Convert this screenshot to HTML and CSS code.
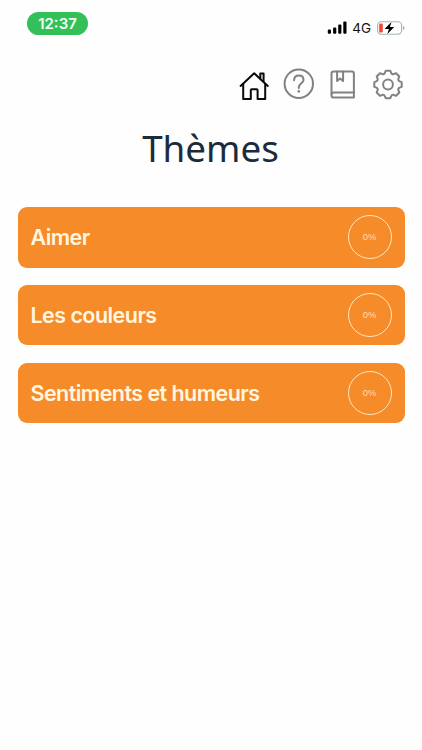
FILE: index.html
```html
<!DOCTYPE html>
<html lang="fr">
<head>
    <meta charset="UTF-8">
    <meta name="viewport" content="width=device-width, initial-scale=1.0">
    <title>Thèmes</title>
    <link rel="stylesheet" href="styles.css">
</head>
<body>
    <div class="status-bar">
        <span class="time">12:37</span>
        <div class="status-right">
            <svg class="signal" width="20" height="13" viewBox="0 0 20 13">
                <rect x="0.8" y="8.6" width="3.2" height="4.2" rx="1"/>
                <rect x="6.1" y="6.4" width="3.2" height="6.4" rx="1"/>
                <rect x="11.2" y="3.4" width="3.2" height="9.4" rx="1"/>
                <rect x="16.3" y="0.4" width="3.2" height="12.4" rx="1"/>
            </svg>
            <span class="network">4G</span>
            <svg class="battery" width="28" height="14" viewBox="0 0 28 14">
                <rect x="0.6" y="0.8" width="24" height="12.4" rx="3.6" fill="none" stroke="#a3b5b4" stroke-width="1.1"/>
                <rect x="2.2" y="2.4" width="3.6" height="9.2" rx="1.4" fill="#f4453e"/>
                <path d="M26 5v4c1-.4 1.5-1.1 1.5-2S27 5.4 26 5z" fill="#a3b5b4"/>
                <path d="M14.6 0.8L7.6 7.9h4.3L10.2 13.3L17.2 6.1h-4.3z" fill="#000" stroke="#fff" stroke-width="1.6" paint-order="stroke"/>
            </svg>
        </div>
    </div>

    <nav class="menu">
        <!-- Accueil -->
        <svg class="icon active" viewBox="0 0 32 32">
            <path d="M2.6 17.9L16.2 5.2L29.8 17.9"/>
            <path d="M5.2 16V31H12.8V22.3Q12.8 21.3 13.8 21.3H18.6Q19.6 21.3 19.6 22.3V31H27.2V16"/>
            <path d="M22.3 10.4V5.4H25.6V13.6"/>
        </svg>
        <!-- Aide -->
        <svg class="icon" viewBox="0 0 32 32">
            <circle cx="15.8" cy="15.7" r="14.2"/>
            <path d="M11.1 12.3C11.1 9.2 13.1 7.5 15.8 7.5S20.5 9.2 20.5 11.9C20.5 15.3 15.8 15.4 15.8 19.4V20"/>
            <circle class="dot" cx="15.8" cy="23.4" r="1.3"/>
        </svg>
        <!-- Lexique -->
        <svg class="icon" viewBox="0 0 32 32">
            <path d="M6.6 3.6H24.9Q26.9 3.6 26.9 5.6V29.6H6.6Q4.5 29.6 4.5 27.5V5.8Q4.5 3.6 6.6 3.6z"/>
            <path d="M4.5 26Q5.2 24.6 6.9 24.6H26.9"/>
            <path d="M10.1 3.6V13.1L13.1 10.6L16.1 13.1V3.6"/>
        </svg>
        <!-- Réglages -->
        <svg class="icon" viewBox="-16 -16.5 32 32">
            <path d="M-2.3 -13.7H2.3L3.2 -11.6A1.9 1.9 0 0 0 5.94 -10.47L8.06 -11.31L11.31 -8.06L10.47 -5.94A1.9 1.9 0 0 0 11.6 -3.2L13.7 -2.3V2.3L11.6 3.2A1.9 1.9 0 0 0 10.47 5.94L11.31 8.06L8.06 11.31L5.94 10.47A1.9 1.9 0 0 0 3.2 11.6L2.3 13.7H-2.3L-3.2 11.6A1.9 1.9 0 0 0 -5.94 10.47L-8.06 11.31L-11.31 8.06L-10.47 5.94A1.9 1.9 0 0 0 -11.6 3.2L-13.7 2.3V-2.3L-11.6 -3.2A1.9 1.9 0 0 0 -10.47 -5.94L-11.31 -8.06L-8.06 -11.31L-5.94 -10.47A1.9 1.9 0 0 0 -3.2 -11.6z"/>
            <circle cx="0" cy="0" r="4.9"/>
        </svg>
    </nav>

    <h1>Thèmes</h1>

    <div class="themes">
        <div class="theme">
            <span class="theme-name">Aimer</span>
            <div class="progress">0%</div>
        </div>
        <div class="theme">
            <span class="theme-name">Les couleurs</span>
            <div class="progress">0%</div>
        </div>
        <div class="theme">
            <span class="theme-name">Sentiments et humeurs</span>
            <div class="progress">0%</div>
        </div>
    </div>
</body>
</html>
```

FILE: styles.css
```css
html, body {
    margin: 0;
    padding: 0;
    background: #fefefe;
}

body {
    font-family: Inter, "Liberation Sans", sans-serif;
}

.status-bar {
    display: flex;
    justify-content: space-between;
    height: 56px;
    padding: 12px 17px 0 27px;
    box-sizing: border-box;
}

.time {
    width: 61px;
    height: 23px;
    line-height: 23px;
    border-radius: 12px;
    background-color: #34c058;
    color: #f4fff4;
    font-size: 15px;
    font-weight: 600;
    text-align: center;
}

.status-right {
    display: flex;
    align-items: center;
    height: 31px;
}

.network {
    margin: 0 6px 0 5px;
    font-size: 13.5px;
    color: #111;
}

.menu {
    display: flex;
    justify-content: flex-end;
    gap: 12.7px;
    padding: 12px 18px 0 0;
}

.icon {
    width: 32px;
    height: 32px;
    fill: none;
    stroke: #808383;
    stroke-width: 2;
    stroke-linecap: round;
    stroke-linejoin: round;
}

.icon.active {
    stroke: #0a0a0a;
}

.icon .dot {
    fill: #808383;
    stroke: none;
}

h1 {
    margin: 22px 0 0;
    padding-right: 1px;
    font-family: "Noto Sans", sans-serif;
    font-size: 36.8px;
    font-weight: 400;
    line-height: 52px;
    text-align: center;
    color: #1c2b3c;
}

.themes {
    display: flex;
    flex-direction: column;
    gap: 17.3px;
    padding: 33px 17.5px 0;
}

.theme {
    display: flex;
    justify-content: space-between;
    align-items: center;
    height: 60.5px;
    padding: 0 13px;
    box-sizing: border-box;
    border-radius: 9px;
    background-color: #f68b29;
}

.theme-name {
    font-size: 21.5px;
    font-weight: 600;
    letter-spacing: -0.55px;
    color: #fff6e0;
}

.progress {
    width: 44px;
    height: 44px;
    line-height: 43px;
    box-sizing: border-box;
    border: 1.5px solid #ffe6bf;
    border-radius: 50%;
    font-family: "Liberation Sans", sans-serif;
    font-size: 9.3px;
    text-align: center;
    color: #ffdcae;
}
```
